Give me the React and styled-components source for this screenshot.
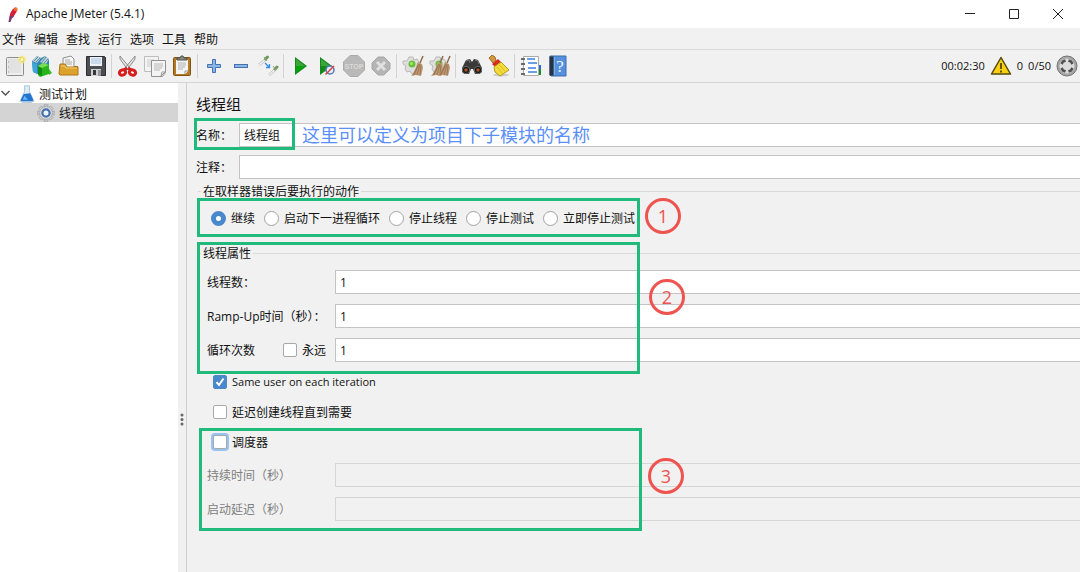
import React from 'react';
import styled, { createGlobalStyle } from 'styled-components';

const GlobalStyle = createGlobalStyle`
  * {
    box-sizing: border-box;
  }
  body {
    margin: 0;
    overflow: hidden;
    background: #f1f1f1;
    color: #111;
    font: 12px/20px 'Open Sans', 'Noto Sans CJK SC', sans-serif;
  }
  button,
  input {
    font: inherit;
    color: inherit;
  }
`;

const Window = styled.div`
  display: flex;
  flex-direction: column;
  min-height: 100vh;
`;

const TitleBar = styled.header`
  display: flex;
  align-items: center;
  height: 28px;
  padding-left: 5px;
  background: #fff;
`;

const Title = styled.h1`
  flex: 1;
  margin: 0 0 0 6px;
  font-size: 12px;
  font-weight: 400;
  line-height: 26px;
`;

const WindowButton = styled.button`
  display: flex;
  align-items: center;
  justify-content: center;
  width: 44px;
  height: 26px;
  padding: 0;
  border: 0;
  background: none;
`;

const MenuBar = styled.nav`
  display: flex;
  gap: 8px;
  height: 22px;
  padding: 2px 2px 0;
  border-bottom: 1px solid #d9d9d9;
`;

const MenuButton = styled.button`
  padding: 0;
  border: 0;
  background: none;
  line-height: 20px;
`;

const Toolbar = styled.div`
  display: flex;
  align-items: center;
  height: 33px;
  padding: 0 2px 0 1px;
  border-bottom: 1px solid #d4d4d4;
`;

const ToolButton = styled.button`
  display: flex;
  align-items: center;
  justify-content: center;
  width: 27px;
  height: 27px;
  padding: 0;
  border: 0;
  background: none;
`;

const Separator = styled.span`
  width: 1px;
  height: 24px;
  margin: 0 2px;
  background: #d2d2d2;
`;

const Status = styled.div`
  display: flex;
  align-items: center;
  gap: 5px;
  margin-left: auto;
  font-size: 11px;
`;

const Body = styled.div`
  display: flex;
  flex: 1;
`;

const Tree = styled.ul`
  width: 178px;
  margin: 0;
  padding: 1px 0 0;
  background: #fff;
  list-style: none;
`;

const TreeItem = styled.li`
  display: flex;
  align-items: center;
  gap: 3px;
  height: 19px;
  padding-left: ${props => (props.$depth ? '36px' : '0')};
  background: ${props => (props.$selected ? '#d4d4d4' : 'transparent')};
`;

const ItemText = styled.span`
  padding-top: 2px;
`;

const Divider = styled.div`
  width: 9px;
  padding: 330px 0 0 2px;
  border-right: 1px solid #d0d0d0;
`;

const Editor = styled.main`
  position: relative;
  flex: 1;
  min-width: 0;
  padding: 10px 0 0 9px;
  overflow: hidden;
`;

const Heading = styled.h2`
  margin: 0 0 8px;
  font-size: 15px;
  font-weight: 400;
  line-height: 22px;
`;

const Row = styled.div`
  display: flex;
  align-items: center;
  margin-bottom: ${props => props.$gap || '10px'};
`;

const Label = styled.label`
  width: ${props => props.$width || '128px'};
  padding-top: 2px;
  color: ${props => (props.$disabled ? '#808080' : 'inherit')};
  white-space: nowrap;
`;

const TextField = styled.input`
  flex: 1;
  min-width: 0;
  height: 24px;
  padding: 0 4px;
  border: 1px solid #c4c4c4;
  border-right: 0;
  border-radius: 0;
  background: #fff;
  outline: 0;
  &:disabled {
    border-color: #d6d6d6;
    background: #f1f1f1;
  }
`;

const Group = styled.fieldset`
  min-width: 0;
  margin: 0 0 0 2px;
  padding: 0;
  border: 0;
  border-top: 1px solid #d9d9d9;
  legend {
    margin-left: 3px;
    padding: 1px 2px 0;
    line-height: 19px;
  }
`;

const RadioRow = styled.div`
  display: flex;
  gap: 9px;
  padding: 7px 0 15px 13px;
`;

const Properties = styled.div`
  padding: 7px 0 0 9px;
`;

const Choice = styled.label`
  display: flex;
  align-items: center;
  gap: 5px;
  height: 20px;
  white-space: nowrap;
`;

const Radio = styled.input.attrs({ type: 'radio' })`
  appearance: none;
  width: 15px;
  height: 15px;
  margin: 0;
  border: 1px solid #a2a2a2;
  border-radius: 50%;
  background: #fff;
  &:checked {
    border: 5px solid #4a88cc;
  }
`;

const Checkbox = styled.input.attrs({ type: 'checkbox' })`
  appearance: none;
  width: 14px;
  height: 14px;
  margin: 0;
  border: 1px solid #a8a8a8;
  border-radius: 2px;
  background: #fff;
  box-shadow: ${props => (props.$focused ? '0 0 0 2px #97c3f3' : 'none')};
  &:checked {
    border-color: #4a88cc;
    background: #4a88cc
      url("data:image/svg+xml,%3Csvg xmlns='http://www.w3.org/2000/svg' viewBox='0 0 12 12'%3E%3Cpath d='M2.5 6.2 5 9 9.5 2.5' fill='none' stroke='white' stroke-width='2'/%3E%3C/svg%3E");
  }
`;

const LoopCell = styled.div`
  display: flex;
  align-items: center;
  width: 128px;
`;

const CheckList = styled.div`
  display: flex;
  flex-direction: column;
  gap: 10px;
  padding: 0 0 11px 6px;
`;

const LatinText = styled.span`
  font-size: 11px;
`;

/* Annotations drawn over the form */
const Frame = styled.div`
  position: absolute;
  left: ${props => props.$left}px;
  top: ${props => props.$top}px;
  width: ${props => props.$width}px;
  height: ${props => props.$height}px;
  border: 3px solid #20ba7c;
  pointer-events: none;
`;

const Badge = styled.span`
  position: absolute;
  left: ${props => props.$left}px;
  top: ${props => props.$top}px;
  width: 36px;
  height: 36px;
  border: 3px solid #ee5350;
  border-radius: 50%;
  color: #ee5350;
  font-size: 18px;
  line-height: 31px;
  text-align: center;
`;

const Note = styled.span`
  position: absolute;
  left: 115px;
  top: 40px;
  color: #5b8ff9;
  font-size: 18px;
  line-height: 24px;
`;

const Icon = ({ size = 22, children }) => (
  <svg width={size} height={size} viewBox="0 0 22 22" fill="none" aria-hidden="true">
    {children}
  </svg>
);

const Feather = () => (
  <Icon size={15}>
    <path d="M14 1c4-1 5 2 3 6l-5 8-5 1c-1-4 2-12 7-15z" fill="#d4213a" />
    <path d="M14 1c4-1 5 1 4 5l-5-1z" fill="#f0782d" />
    <path d="M7 13l6 1-3 3-2 5H5z" fill="#7b3577" />
  </Icon>
);

const NewIcon = () => (
  <Icon>
    <rect x="2.500" y="2.500" width="17" height="18" rx="1" fill="#eee" stroke="#8d8d8d" />
    <path d="M4 4h13v14H4z" fill="#e2e2e2" />
    <path d="M4 7h1M4 12h1M4 17h1" stroke="#999" />
    <circle cx="18" cy="4.500" r="4" fill="#f7e98a" opacity=".7" />
    <path d="m18 1 1.200 2.300 2.300 1.200-2.300 1.200L18 8l-1.200-2.300-2.300-1.200 2.300-1.200z" fill="#f5da3c" />
    <circle cx="18" cy="4.500" r="1.200" fill="#fff" />
  </Icon>
);

const TemplatesIcon = () => (
  <Icon>
    <path d="M1 6 6 1l4 2 4-2 4 3v9l-9 7-7-3z" fill="#3286b5" />
    <path d="m1 6 5-5 4 2-4 5zM9 7l5-6 4 3-3 5z" fill="#b6cdd7" />
    <path d="m3 6 4-4M5 7l4-4M11 7l4-5M13 8l4-4" stroke="#668fa4" />
    <path d="m1 7 5 2v10l-4-2z" fill="#3da5d8" />
    <path d="m7 11 5-3 6 2v9l-9 3-2-2z" fill="#27b51b" />
    <path d="m7 11 4 2v8l-4-2z" fill="#128c0e" />
    <path d="m7 11 5-3 6 2-7 3z" fill="#78df55" />
    <path d="m18 14 3 4-3 2z" fill="#3bb82c" />
  </Icon>
);

const OpenIcon = () => (
  <Icon>
    <path d="M2 9h5l2 2h11v9H2z" fill="#a87008" />
    <path d="m5 3 8-2 3 3v9H5z" fill="#f5f5f5" stroke="#909090" />
    <path d="M7 5h5M7 7h7M7 9h7" stroke="#aaa" />
    <path d="M2 9h5l2 3h11v8H2l-1-1z" fill="#dda22b" stroke="#ac7718" />
    <path d="M3 11h4l1 2h11" stroke="#f6cf72" />
  </Icon>
);

const SaveIcon = () => (
  <Icon>
    <path d="M1.500 1.500h18l1 1v18h-19z" fill="#4c4e52" stroke="#2d2e31" />
    <path d="M5 2h12v9H5z" fill="#edf4fc" />
    <path d="M6 4h10M6 6h10M6 8h10" stroke="#a8bfdc" />
    <path d="M6 14h10v7H6z" fill="#cfd0d2" />
    <path d="M8 15h3v5H8z" fill="#35373b" />
    <path d="M13 15h3v6h-3z" fill="#929599" />
  </Icon>
);

const CutIcon = () => (
  <Icon>
    <path d="m3 1 10 12-2 2L3 4zM18 1 8 13l2 2 8-11z" fill="#e6e6e6" stroke="#8b8b8b" />
    <path d="m10 13-3 2M11 13l3 2" stroke="#d22222" strokeWidth="3" />
    <ellipse cx="5.500" cy="17.500" rx="3.200" ry="2.600" transform="rotate(-20 5.500 17.500)" stroke="#d81d1d" strokeWidth="3" />
    <ellipse cx="15.500" cy="17.500" rx="3.200" ry="2.600" transform="rotate(20 15.500 17.500)" stroke="#d81d1d" strokeWidth="3" />
  </Icon>
);

const CopyIcon = () => (
  <Icon>
    <path d="M.5 1.500h14v15H.5z" fill="#f3f3f3" stroke="#bdbdbd" />
    <path d="M3 5h7M3 7h7M3 9h4M3 11h4" stroke="#ccc" />
    <path d="M7.500 5.500h14v12l-3 4h-11z" fill="#f4f4f4" stroke="#929292" />
    <path d="M10 9h9M10 11h9M10 13h8M10 15h6" stroke="#b7b7b7" />
    <path d="m17 21 1-4h3z" fill="#fff" stroke="#999" />
  </Icon>
);

const PasteIcon = () => (
  <Icon>
    <rect x="2.500" y="2.500" width="17" height="18" rx="1" fill="#b47a25" stroke="#83540f" />
    <path d="M5 5h12v11l-3 3H5z" fill="#f4f4f4" />
    <path d="M7 8h8M7 10h8M7 12h7M7 14h5" stroke="#b0b0b0" />
    <path d="M14 19v-3h3" fill="#fff" stroke="#999" />
    <path d="M6 5V3h3l1-2h2l1 2h3v2z" fill="#8b8d86" stroke="#51534e" />
  </Icon>
);

const PlusIcon = () => (
  <Icon>
    <path d="M9.500 4.500h3v5h5v3h-5v5h-3v-5h-5v-3h5z" fill="#90b4df" stroke="#3f73b4" />
  </Icon>
);

const MinusIcon = () => (
  <Icon>
    <rect x="4.500" y="9.500" width="13" height="3" fill="#90b4df" stroke="#3f73b4" />
  </Icon>
);

const ToggleIcon = () => (
  <Icon>
    <path d="m9 4-7 6M19 14l-7 6" stroke="#b9bcb7" strokeWidth="2.500" />
    <path d="m9 4-7 6M19 14l-7 6" stroke="#f7f7f7" strokeWidth="1.200" />
    <path d="m8.500 4 2-2M18 14l2-2" stroke="#6c9c58" strokeWidth="3" strokeLinecap="round" />
    <path d="m7 2 3 4M16 11l3 4" stroke="#93a08c" />
    <path d="m8 8 4 4M9 12.500h3.500V9" stroke="#348bea" strokeWidth="1.300" />
  </Icon>
);

const StartIcon = () => (
  <Icon>
    <path d="M6 2v18l12-9z" fill="#15891d" />
    <path d="M7 4v7h9z" fill="#3ca63b" />
    <path d="M7 11v7l9-7z" fill="#06a40b" />
  </Icon>
);

const StartNoTimersIcon = () => (
  <Icon>
    <path d="M4 2v18l12-9z" fill="#15891d" />
    <path d="M5 4v7h9z" fill="#3ca63b" />
    <circle cx="14" cy="15" r="4" fill="#e4edf6" stroke="#547ab4" strokeWidth="1.500" />
    <path d="m9.500 19.500 8.500-8.500" stroke="#e03c3c" strokeWidth="1.500" />
  </Icon>
);

const StopIcon = () => (
  <Icon>
    <path d="M7 .5h8L21.500 7v8L15 21.500H7L.5 15V7z" fill="#b9b9b9" stroke="#aaa" />
    <text x="11" y="14" fill="#dadada" fontFamily="Liberation Sans" fontSize="7" fontWeight="700" textAnchor="middle">
      STOP
    </text>
  </Icon>
);

const ShutdownIcon = () => (
  <Icon>
    <path d="M8 2h6l6 6v6l-6 6H8l-6-6V8z" fill="#b5b5b5" stroke="#a8a8a8" />
    <path d="m7 7 8 8M15 7l-8 8" stroke="#e1e1e1" strokeWidth="3" />
  </Icon>
);

const Gear = () => (
  <>
    <path
      d="M7 2h4l1 3 3-1 2 3-2 3 3 2v3l-4 1v3h-4l-2-3-3 1-2-3 1-3-3-2V6h4z"
      fill="#dedede"
      stroke="#b8b8b8"
    />
    <circle cx="10" cy="9" r="3.500" fill="#6abf3a" />
    <circle cx="9.500" cy="8.500" r="1.500" fill="#a5ea69" />
  </>
);

const Brush = ({ x }) => (
  <g transform={`translate(${x} 0)`}>
    <path d="M20 1 17 8" stroke="#8a6b49" strokeWidth="1.500" />
    <path d="m15 7 4 2 1 4-2 8-5-1-5 1c4-4 5-10 7-14z" fill="#bd9872" />
    <path d="m16 9-5 11M17 9l-3 11M18 10l-1 10M15 11l-5 9" stroke="#8f6d4a" strokeWidth=".7" />
  </g>
);

const ClearIcon = () => (
  <Icon>
    <Gear />
    <Brush x={1} />
  </Icon>
);

const ClearAllIcon = () => (
  <Icon>
    <Gear />
    <Brush x={-6} />
    <Brush x={1} />
  </Icon>
);

const SearchIcon = () => (
  <Icon>
    <path d="m5 5 4-1 2 3 2-3 4 1 4 8v4l-3 2h-4l-2-5h-2l-2 5H4l-3-2v-4z" fill="#393939" />
    <path d="m5 6 3-1 1 3M14 5l3 1 1 3" stroke="#777" />
    <circle cx="5" cy="15" r="3.700" fill="#171717" stroke="#696969" />
    <circle cx="17" cy="15" r="3.700" fill="#171717" stroke="#696969" />
    <circle cx="5" cy="15" r="1.800" fill="#a05427" />
    <circle cx="17" cy="15" r="1.800" fill="#a05427" />
  </Icon>
);

const SearchResetIcon = () => (
  <Icon>
    <ellipse cx="13" cy="20" rx="8" ry="1.500" fill="#ccc" />
    <path d="m1 3 3-3 3 2 1 4-3 2z" fill="#d39842" stroke="#a36c23" />
    <path d="m4 9 6-5 3 3-6 5z" fill="#d82c20" />
    <path d="m6 12 7-5 8 8-9 6-5-4z" fill="#f3dc39" stroke="#b69a19" />
    <path d="m9 12 5 6M11 10l6 6" stroke="#d8bb2b" />
  </Icon>
);

const FunctionIcon = () => (
  <Icon>
    <path d="M17 10h4v4h-4z" fill="#2f68db" />
    <path d="M17 14h4v6h-4z" fill="#1a8d2c" />
    <path d="M3.500 1.500h15v19h-15z" fill="#fff" stroke="#aaa" />
    <path d="M7 4h8M8 8h9M8 13h8M8 17h9" stroke="#3d80e1" strokeWidth="1.400" />
    <path d="M1 4h4M1 9h4M1 14h4M1 19h4" stroke="#6b6b6b" strokeWidth="2" />
  </Icon>
);

const HelpIcon = () => (
  <Icon>
    <path d="M3 1h16v20H4l-1-1z" fill="#5590dc" stroke="#3d6cae" />
    <path d="M2.500 1.500h4v19h-4z" fill="#263340" />
    <path d="M7 2h1v18H7z" fill="#7dabea" />
    <text x="13" y="17" fill="#eef5ff" fontFamily="Liberation Serif" fontSize="17" textAnchor="middle">
      ?
    </text>
  </Icon>
);

const WarningIcon = () => (
  <Icon>
    <path d="m11 2.500 9.500 16.500h-19z" fill="#f8cf11" stroke="#54490d" strokeWidth="1.500" strokeLinejoin="round" />
    <path d="M11 8v6M11 15.500v2" stroke="#332d0b" strokeWidth="1.500" />
  </Icon>
);

const ExpandIcon = () => (
  <Icon>
    <circle cx="11" cy="11" r="10" fill="#a6a6a6" stroke="#737373" />
    <circle cx="11" cy="11" r="7.500" fill="#dcdcdc" />
    <path
      d="M5.500 9 7 6.500l2.500-1M16.500 9 15 6.500l-2.500-1M5.500 13 7 15.500l2.500 1M16.500 13 15 15.500l-2.500 1"
      stroke="#505050"
      strokeWidth="2.500"
    />
  </Icon>
);

const FlaskIcon = () => (
  <Icon size={18}>
    <ellipse cx="11" cy="20" rx="10" ry="1.500" fill="#d5d5d5" />
    <path d="M8 1h6v7l5 11-2 2H5l-2-2L8 8z" fill="#dcecf8" stroke="#9dbbd3" />
    <path d="m7 11 8-1 4 9-2 1H5l-2-1z" fill="#2376d0" />
    <path d="m8 13-2 5h6z" fill="#71b8f5" />
  </Icon>
);

const ThreadGroupIcon = () => (
  <Icon size={20}>
    {[0, 45, 90, 135].map(angle => (
      <rect
        key={angle}
        x="9"
        y="2"
        width="4"
        height="18"
        fill="#cfd1d3"
        stroke="#a2a5a8"
        transform={`rotate(${angle} 11 11)`}
      />
    ))}
    <circle cx="11" cy="11" r="7" fill="#dcdddf" stroke="#aaa" />
    <circle cx="11" cy="11" r="4" fill="#eaf2fc" stroke="#4772ad" strokeWidth="2.500" />
  </Icon>
);

const TOOL_GROUPS = [
  [['新建', NewIcon], ['模板', TemplatesIcon], ['打开', OpenIcon], ['保存', SaveIcon]],
  [['剪切', CutIcon], ['复制', CopyIcon], ['粘贴', PasteIcon]],
  [['展开', PlusIcon], ['折叠', MinusIcon], ['切换', ToggleIcon]],
  [['启动', StartIcon], ['不停顿启动', StartNoTimersIcon], ['停止', StopIcon], ['关闭', ShutdownIcon]],
  [['清除', ClearIcon], ['清除全部', ClearAllIcon]],
  [['查找', SearchIcon], ['重置搜索', SearchResetIcon]],
  [['函数助手', FunctionIcon], ['帮助', HelpIcon]]
];

const MENUS = ['文件', '编辑', '查找', '运行', '选项', '工具', '帮助'];

const ERROR_ACTIONS = ['继续', '启动下一进程循环', '停止线程', '停止测试', '立即停止测试'];

const App = () => (
  <>
    <GlobalStyle />
    <Window>
      <TitleBar>
        <Feather />
        <Title>Apache JMeter (5.4.1)</Title>
        <WindowButton aria-label="最小化">
          <svg width="10" height="10" stroke="#222">
            <path d="M0 4.500h10" />
          </svg>
        </WindowButton>
        <WindowButton aria-label="最大化">
          <svg width="10" height="10" fill="none" stroke="#222">
            <path d="M.5.5h9v9h-9z" />
          </svg>
        </WindowButton>
        <WindowButton aria-label="关闭">
          <svg width="10" height="10" stroke="#222">
            <path d="m0 0 10 10M10 0 0 10" />
          </svg>
        </WindowButton>
      </TitleBar>
      <MenuBar>
        {MENUS.map(menu => (
          <MenuButton key={menu}>{menu}</MenuButton>
        ))}
      </MenuBar>
      <Toolbar>
        {TOOL_GROUPS.map((group, i) => (
          <React.Fragment key={group[0][0]}>
            {i > 0 && <Separator />}
            {group.map(([name, ToolIcon]) => (
              <ToolButton key={name} aria-label={name}>
                <ToolIcon />
              </ToolButton>
            ))}
          </React.Fragment>
        ))}
        <Status>
          <span>00:02:30</span>
          <WarningIcon />
          <span>0</span>
          <span>0/50</span>
          <ExpandIcon />
        </Status>
      </Toolbar>
      <Body>
        <Tree>
          <TreeItem>
            <svg width="15" height="12" fill="none" stroke="#555" strokeWidth="1.500">
              <path d="m1.500 3 4 4 4-4" />
            </svg>
            <FlaskIcon />
            <ItemText>测试计划</ItemText>
          </TreeItem>
          <TreeItem $depth={1} $selected>
            <ThreadGroupIcon />
            <ItemText>线程组</ItemText>
          </TreeItem>
        </Tree>
        <Divider>
          <svg width="4" height="14" fill="#666">
            <circle cx="2" cy="2" r="1.500" />
            <circle cx="2" cy="6.500" r="1.500" />
            <circle cx="2" cy="11" r="1.500" />
          </svg>
        </Divider>
        <Editor>
          <Heading>线程组</Heading>
          <Row $gap="8px">
            <Label htmlFor="name" $width="43px">名称：</Label>
            <TextField id="name" defaultValue="线程组" />
          </Row>
          <Row $gap="2px">
            <Label htmlFor="comments" $width="43px">注释：</Label>
            <TextField id="comments" />
          </Row>
          <Group>
            <legend>在取样器错误后要执行的动作</legend>
            <RadioRow>
              {ERROR_ACTIONS.map((action, i) => (
                <Choice key={action}>
                  <Radio name="action" defaultChecked={i === 0} />
                  <ItemText>{action}</ItemText>
                </Choice>
              ))}
            </RadioRow>
          </Group>
          <Group>
            <legend>线程属性</legend>
            <Properties>
              <Row>
                <Label htmlFor="threads">线程数：</Label>
                <TextField id="threads" defaultValue="1" />
              </Row>
              <Row>
                <Label htmlFor="ramp">Ramp-Up时间（秒）：</Label>
                <TextField id="ramp" defaultValue="1" />
              </Row>
              <Row>
                <LoopCell>
                  <Label htmlFor="loops" $width="76px">循环次数</Label>
                  <Choice>
                    <Checkbox />
                    <ItemText>永远</ItemText>
                  </Choice>
                </LoopCell>
                <TextField id="loops" defaultValue="1" />
              </Row>
              <CheckList>
                <Choice>
                  <Checkbox defaultChecked />
                  <LatinText>Same user on each iteration</LatinText>
                </Choice>
                <Choice>
                  <Checkbox />
                  <ItemText>延迟创建线程直到需要</ItemText>
                </Choice>
                <Choice>
                  <Checkbox $focused />
                  <ItemText>调度器</ItemText>
                </Choice>
              </CheckList>
              <Row>
                <Label htmlFor="duration" $disabled>持续时间（秒）</Label>
                <TextField id="duration" disabled />
              </Row>
              <Row>
                <Label htmlFor="delay" $disabled>启动延迟（秒）</Label>
                <TextField id="delay" disabled />
              </Row>
            </Properties>
          </Group>
          <Frame $left={7} $top={35} $width={101} $height={32} />
          <Frame $left={10} $top={115} $width={443} $height={39} />
          <Frame $left={10} $top={159} $width={443} $height={132} />
          <Frame $left={12} $top={345} $width={443} $height={103} />
          <Note>这里可以定义为项目下子模块的名称</Note>
          <Badge $left={458} $top={115}>1</Badge>
          <Badge $left={462} $top={196}>2</Badge>
          <Badge $left={461} $top={375}>3</Badge>
        </Editor>
      </Body>
    </Window>
  </>
);

export default App;
